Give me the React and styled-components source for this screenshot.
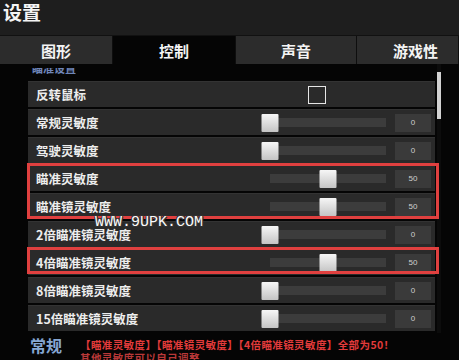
import React from 'react';
import styled, { createGlobalStyle } from 'styled-components';

const GlobalStyle = createGlobalStyle`
  body {
    margin: 0;
    background: #050505;
    font-family: "Noto Sans CJK SC", "Noto Sans", sans-serif;
  }
`;

const tabs = ['图形', '控制', '声音', '游戏性'];

const rows = [
  { label: '反转鼠标', type: 'check' },
  { label: '常规灵敏度', value: 0 },
  { label: '驾驶灵敏度', value: 0 },
  { label: '瞄准灵敏度', value: 50, group: 1 },
  { label: '瞄准镜灵敏度', value: 50, group: 1 },
  { label: '2倍瞄准镜灵敏度', value: 0 },
  { label: '4倍瞄准镜灵敏度', value: 50, group: 2 },
  { label: '8倍瞄准镜灵敏度', value: 0 },
  { label: '15倍瞄准镜灵敏度', value: 0 },
];

function SettingRow({ row }) {
  return (
    <Row>
      <Label>{row.label}</Label>
      {row.type === 'check' ? (
        <Checkbox />
      ) : (
        <>
          <Track>
            <Thumb style={{ left: `${row.value}%` }} />
          </Track>
          <ValueBox>{row.value}</ValueBox>
        </>
      )}
    </Row>
  );
}

export default function App() {
  // group consecutive rows that share a red highlight
  const blocks = [];
  rows.forEach((row) => {
    const last = blocks[blocks.length - 1];
    if (row.group && last && last.group === row.group) {
      last.items.push(row);
    } else {
      blocks.push({ group: row.group, items: [row] });
    }
  });

  return (
    <>
      <GlobalStyle />
      <Screen>
        <Header>设置</Header>
        <TabBar>
          {tabs.map((t, i) => (
            <Tab key={t} active={i === 1} last={i === tabs.length - 1}>
              {t}
            </Tab>
          ))}
        </TabBar>
        <Body>
          <Content>
            <SectionCut>
              <SectionClip>
                <SectionLabel>瞄准设置</SectionLabel>
              </SectionClip>
            </SectionCut>
            {blocks.map((b, i) =>
              b.group ? (
                <Highlight key={i} second={b.group === 2}>
                  {b.items.map((r) => (
                    <SettingRow key={r.label} row={r} />
                  ))}
                </Highlight>
              ) : (
                b.items.map((r) => <SettingRow key={r.label} row={r} />)
              )
            )}
          </Content>
          <ScrollTrack>
            <ScrollThumb />
          </ScrollTrack>
        </Body>
        <Footer>
          <FooterTitle>常规</FooterTitle>
          <Note>
            <NoteLine>【瞄准灵敏度】【瞄准镜灵敏度】【4倍瞄准镜灵敏度】全部为50！</NoteLine>
            <NoteLine dim>其他灵敏度可以自己调整</NoteLine>
          </Note>
        </Footer>
        <Watermark>WWW.9UPK.COM</Watermark>
      </Screen>
    </>
  );
}

const Screen = styled.div`
  position: relative;
  width: 459px;
  height: 360px;
  overflow: hidden;
  background: #050505;
  color: #ececec;
`;

const Header = styled.div`
  height: 35px;
  padding-left: 3px;
  background: #1e1e1e;
  color: #f4f4f4;
  font-size: 19px;
  font-weight: 700;
  line-height: 24px;
`;

const TabBar = styled.div`
  display: grid;
  grid-template-columns: 113px 123px 121px 1fr;
  height: 28px;
  border-top: 1px solid #111;
`;

const Tab = styled.div`
  display: flex;
  align-items: center;
  justify-content: center;
  padding-left: ${(p) => (p.last ? '16px' : '0')};
  background: ${(p) => (p.active ? '#050505' : '#2c2c2c')};
  border-right: 1px solid #0e0e0e;
  color: #f4f4f4;
  font-size: 15px;
  font-weight: 700;
`;

const Body = styled.div`
  display: flex;
  align-items: flex-start;
  padding-left: 28px;
`;

const Content = styled.div`
  width: 407px;
`;

const SectionCut = styled.div`
  height: 17px;
  padding-top: 4px;
  box-sizing: border-box;
`;

const SectionClip = styled.div`
  height: 6px;
  overflow: hidden;
`;

const SectionLabel = styled.div`
  margin-top: -7px;
  padding-left: 4px;
  font-size: 11px;
  line-height: 14px;
  color: #6f86b8;
  font-weight: 700;
`;

const Row = styled.div`
  display: flex;
  align-items: center;
  height: 26px;
  margin-bottom: 2px;
  padding: 0 4px 0 8px;
  background: #2a2a2a;
  border-top: 1px solid #333;
  box-sizing: border-box;
`;

const Label = styled.div`
  flex: 1;
  font-size: 12.5px;
  font-weight: 700;
  color: #ededed;
`;

const Checkbox = styled.div`
  width: 16px;
  height: 16px;
  margin-right: 105px;
  border: 1.5px solid #e6e6e6;
`;

const Track = styled.div`
  position: relative;
  width: 116px;
  height: 9px;
  margin-right: 9px;
  background: #3c3c3c;
`;

const Thumb = styled.div`
  position: absolute;
  top: 50%;
  width: 17px;
  height: 18px;
  transform: translate(-50%, -50%);
  background: linear-gradient(#f6f6f6, #c4c4c4);
  border-radius: 1px;
`;

const ValueBox = styled.div`
  width: 36px;
  height: 18px;
  background: #3a3a3a;
  color: #cfcfcf;
  font-family: "Liberation Sans", sans-serif;
  font-size: 8px;
  line-height: 18px;
  text-align: center;
`;

const Highlight = styled.div`
  position: relative;

  &::after {
    content: '';
    position: absolute;
    top: -2px;
    bottom: ${(p) => (p.second ? '1px' : '0')};
    left: -1px;
    right: -4px;
    border: 3.5px solid #e0403f;
    pointer-events: none;
  }
`;

const ScrollTrack = styled.div`
  width: 4px;
  height: 269px;
  margin-left: 2px;
  padding-top: 8px;
  box-sizing: border-box;
  background: #0c0c0c;
`;

const ScrollThumb = styled.div`
  height: 47px;
  background: #d2d2d2;
`;

const Footer = styled.div`
  display: flex;
  gap: 18px;
  padding: 0 0 0 30px;
`;

const FooterTitle = styled.div`
  font-size: 16px;
  font-weight: 700;
  color: #86a7d3;
  line-height: 24px;
`;

const Note = styled.div`
  padding-top: 5px;
`;

const NoteLine = styled.div`
  font-size: 10.5px;
  font-weight: 700;
  line-height: 13px;
  letter-spacing: 0.4px;
  color: ${(p) => (p.dim ? '#b83838' : '#e33b3b')};
  white-space: nowrap;
`;

const Watermark = styled.div`
  position: absolute;
  left: 95px;
  top: 214px;
  font-family: "Liberation Mono", monospace;
  font-size: 15px;
  color: #fafafa;
  text-shadow: 1px 1px 0 #333, -1px -1px 0 #333, 1px -1px 0 #333, -1px 1px 0 #333;
  pointer-events: none;
`;
